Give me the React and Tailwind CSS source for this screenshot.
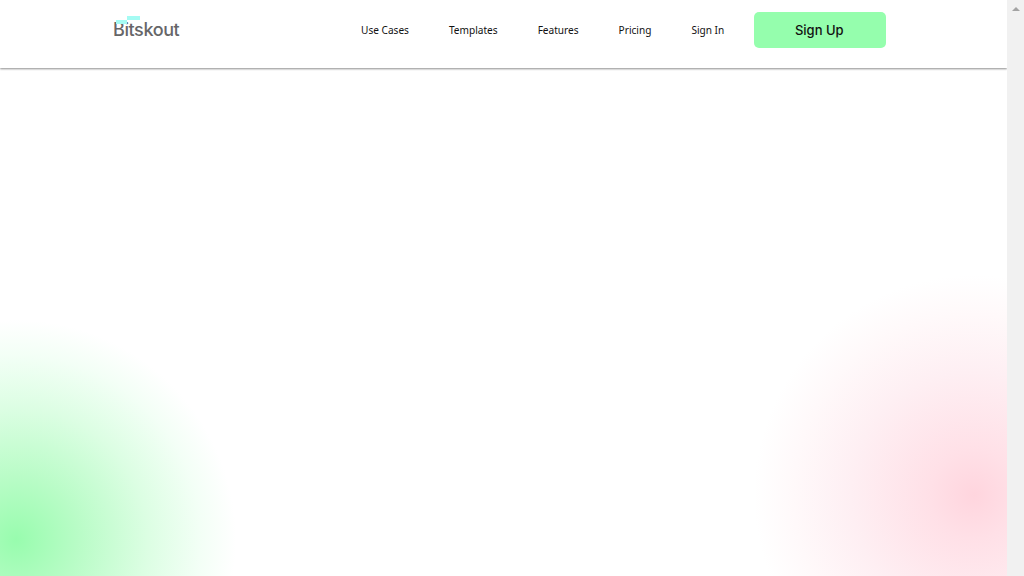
const navLinks = ['Use Cases', 'Templates', 'Features', 'Pricing', 'Sign In']

function Logo() {
  return (
    <div className="relative w-[67px] h-[36px] flex items-end">
      <div className="absolute left-[3px] top-[8px] w-[11px] h-[4px] bg-[#a5fbf3]" />
      <div className="absolute left-[14px] top-[4px] w-[13px] h-[4px] bg-[#a5fbf3]" />
      <span className="font-['Inter',sans-serif] text-[18px] leading-[26px] mb-[5px] font-medium tracking-[-0.4px] text-[#666668]">
        Bitskout
      </span>
    </div>
  )
}

function Header() {
  return (
    <header className="relative z-10 h-[68px] bg-white shadow-[0_1px_2px_rgba(0,0,0,0.45)] flex items-center pl-[113px] pb-[8px]">
      <Logo />
      <nav className="flex items-center gap-[40px] ml-[181px] font-['Noto_Sans',sans-serif] text-[10.1px] text-[#111]">
        {navLinks.map((link) => (
          <a key={link} href="#" className="leading-[16px]">
            {link}
          </a>
        ))}
      </nav>
      <a
        href="#"
        className="ml-[30px] w-[132px] h-[36px] rounded-[5px] bg-[#95fead] flex items-center justify-center pt-[1px] pr-[2px] font-['Inter',sans-serif] text-[13px] font-medium text-[#111]"
      >
        Sign Up
      </a>
    </header>
  )
}

function Scrollbar() {
  return (
    <aside className="w-[17px] h-full shrink-0 bg-[#f1f1f1] flex justify-center pt-[7px]">
      <div className="w-0 h-0 border-x-[4px] border-x-transparent border-b-[4px] border-b-[#a3a3a3]" />
    </aside>
  )
}

export default function App() {
  return (
    <div className="h-[576px] w-full flex overflow-hidden bg-white">
      <main className="relative flex-1 h-full overflow-hidden">
        <Header />
        {/* decorative glows */}
        <div className="absolute left-[-204px] top-[320px] w-[440px] h-[440px] bg-[radial-gradient(circle_closest-side,#98fcae_0%,#b8fcc6_28%,#dcfee3_60%,#f3fff6_84%,#ffffff_100%)]" />
        <div className="absolute left-[754px] top-[275px] w-[440px] h-[440px] bg-[radial-gradient(circle_closest-side,#ffd5de_0%,#ffe0e7_20%,#feeff3_56%,#fff9fa_82%,#ffffff_100%)]" />
      </main>
      <Scrollbar />
    </div>
  )
}
